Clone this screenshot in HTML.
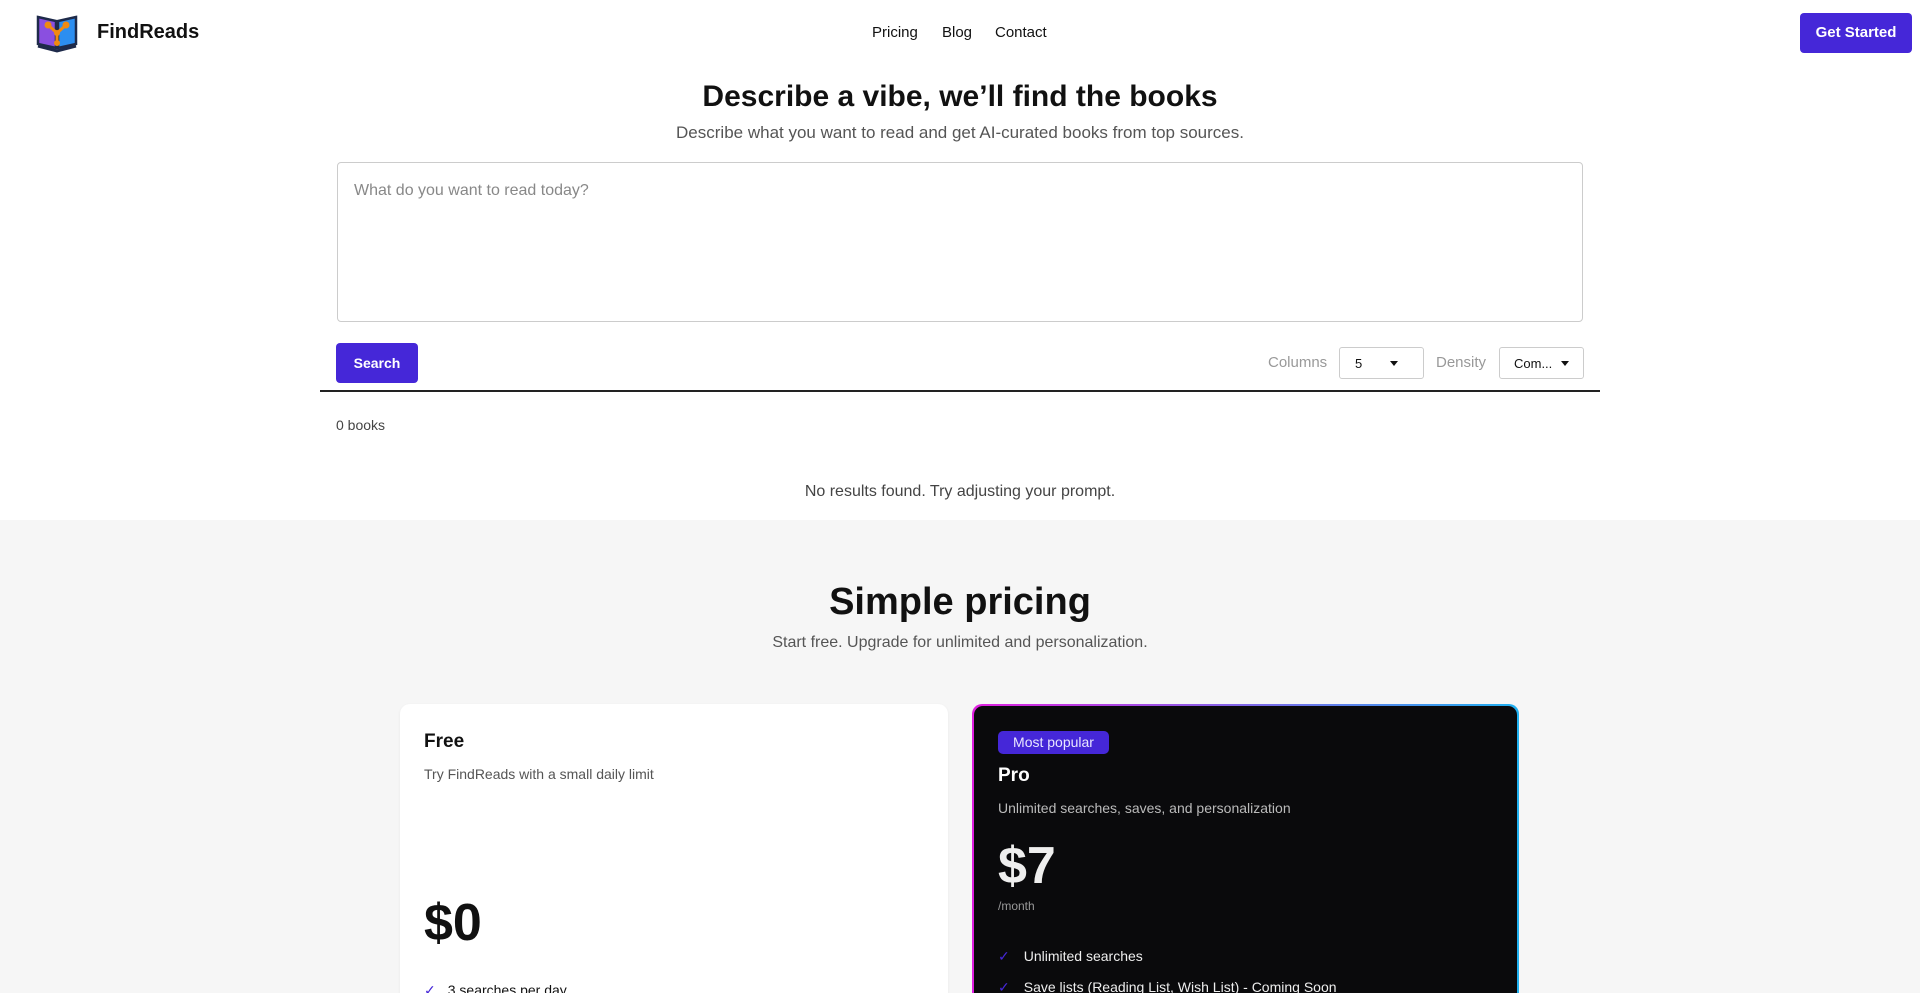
<!DOCTYPE html>
<html style="overflow:hidden;height:993px"><head><meta charset="utf-8"><style>
*{box-sizing:border-box;margin:0;padding:0}
body{width:1920px;height:993px;overflow:hidden;font-family:"Liberation Sans",sans-serif;background:#fff;color:#111;position:relative}
.a{position:absolute;white-space:nowrap}
</style></head><body>
<svg class="a" style="left:35px;top:13px" width="44" height="40" viewBox="0 0 44 40">
<path d="M3 4 L21 8 L21 35 L3 31 Z" fill="#8a4fe0" stroke="#1e2a4a" stroke-width="2.5"/>
<path d="M41 4 L23 8 L23 35 L41 31 Z" fill="#2c8ef0" stroke="#1e2a4a" stroke-width="2.5"/>
<path d="M3 33 L22 38 L41 33" fill="none" stroke="#1e2a4a" stroke-width="3"/>
<path d="M13 12 L22 20 L31 12 M22 20 L22 30" stroke="#f08a10" stroke-width="3" fill="none"/>
<circle cx="13" cy="12" r="3.5" fill="#f08a10"/><circle cx="31" cy="12" r="3.5" fill="#f08a10"/><circle cx="22" cy="20" r="3" fill="#f08a10"/><circle cx="22" cy="30" r="3" fill="#f08a10"/>
</svg>
<div class="a" style="left:97px;top:21px;font-size:20px;font-weight:bold">FindReads</div>
<div class="a" style="left:872px;top:24px;font-size:15px">Pricing</div>
<div class="a" style="left:942px;top:24px;font-size:15px">Blog</div>
<div class="a" style="left:995px;top:24px;font-size:15px">Contact</div>
<div class="a" style="left:1800px;top:13px;width:112px;height:40px;background:#4527d8;border-radius:4px;color:#fff;font-size:15px;font-weight:bold;text-align:center;line-height:40px">Get Started</div>
<div class="a" style="left:0;width:1920px;top:80px;text-align:center;font-size:30px;font-weight:bold">Describe a vibe, we’ll find the books</div>
<div class="a" style="left:0;width:1920px;top:123px;text-align:center;font-size:17px;color:#555">Describe what you want to read and get AI-curated books from top sources.</div>
<div class="a" style="left:337px;top:162px;width:1246px;height:160px;border:1px solid #ccc;border-radius:4px"></div>
<div class="a" style="left:354px;top:182px;font-size:16px;color:#888">What do you want to read today?</div>
<div class="a" style="left:336px;top:343px;width:82px;height:40px;background:#4527d8;border-radius:4px;color:#fff;font-size:14px;font-weight:bold;text-align:center;line-height:40px">Search</div>
<div class="a" style="left:1268px;top:354px;font-size:15px;color:#999">Columns</div>
<div class="a" style="left:1339px;top:347px;width:85px;height:32px;border:1px solid #ccc;border-radius:3px;font-size:13px;padding:8px 15px">5<span style="position:absolute;right:25px;top:13px;border:4px solid transparent;border-top:5px solid #111"></span></div>
<div class="a" style="left:1436px;top:354px;font-size:15px;color:#999">Density</div>
<div class="a" style="left:1499px;top:347px;width:85px;height:32px;border:1px solid #ccc;border-radius:3px;font-size:13px;padding:8px 14px">Com...<span style="position:absolute;right:14px;top:13px;border:4px solid transparent;border-top:5px solid #111"></span></div>
<div class="a" style="left:320px;top:390px;width:1280px;height:2px;background:#222"></div>
<div class="a" style="left:336px;top:417px;font-size:14px;color:#444">0 books</div>
<div class="a" style="left:0;width:1920px;top:483px;text-align:center;font-size:16px;color:#444">No results found. Try adjusting your prompt.</div>
<div class="a" style="left:0;top:520px;width:1920px;height:473px;background:#f6f6f6"></div>
<div class="a" style="left:0;width:1920px;top:581px;text-align:center;font-size:38px;font-weight:bold">Simple pricing</div>
<div class="a" style="left:0;width:1920px;top:634px;text-align:center;font-size:16px;color:#555">Start free. Upgrade for unlimited and personalization.</div>
<div class="a" style="left:400px;top:704px;width:548px;height:300px;background:#fff;border-radius:10px;box-shadow:0 1px 3px rgba(0,0,0,.06)"></div>
<div class="a" style="left:424px;top:731px;font-size:19px;font-weight:bold">Free</div>
<div class="a" style="left:424px;top:766px;font-size:14px;color:#555">Try FindReads with a small daily limit</div>
<div class="a" style="left:424px;top:893px;font-size:52px;font-weight:bold">$0</div>
<div class="a" style="left:424px;top:982px;font-size:14px"><span style="color:#4527d8;margin-right:12px">✓</span>3 searches per day</div>
<div class="a" style="left:972px;top:704px;width:547px;height:300px;border-radius:10px;background:linear-gradient(90deg,#e020e0,#20b0f0);padding:2px"><div style="width:100%;height:100%;background:#0a0a0c;border-radius:9px"></div></div>
<div class="a" style="left:998px;top:731px;width:111px;height:23px;background:#4527d8;border-radius:5px;color:#e8e6ff;font-size:14px;text-align:center;line-height:23px">Most popular</div>
<div class="a" style="left:998px;top:765px;font-size:19px;font-weight:bold;color:#fff">Pro</div>
<div class="a" style="left:998px;top:800px;font-size:14px;color:#bbb">Unlimited searches, saves, and personalization</div>
<div class="a" style="left:998px;top:836px;font-size:52px;font-weight:bold;color:#eee">$7</div>
<div class="a" style="left:998px;top:899px;font-size:12px;color:#999">/month</div>
<div class="a" style="left:998px;top:948px;font-size:14px;color:#eee"><span style="color:#4527d8;margin-right:14px">✓</span>Unlimited searches</div>
<div class="a" style="left:998px;top:979px;font-size:14px;color:#eee"><span style="color:#4527d8;margin-right:14px">✓</span>Save lists (Reading List, Wish List) - Coming Soon</div>
</body></html>
